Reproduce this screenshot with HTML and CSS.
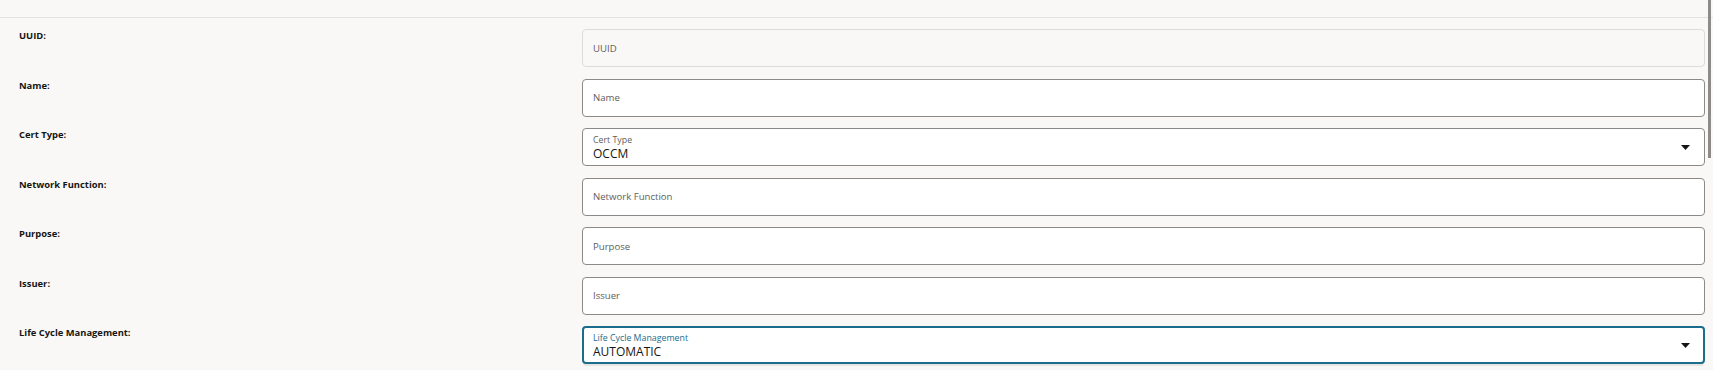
FILE: index.html
```html
<!DOCTYPE html>
<html lang="en">
<head>
<meta charset="utf-8">
<title>Certificate</title>
<link rel="stylesheet" href="styles.css">
</head>
<body>
<div class="topbar"></div>
<form class="form">
  <div class="row">
    <div class="label">UUID:</div>
    <div class="field readonly"><span class="placeholder">UUID</span></div>
  </div>
  <div class="row">
    <div class="label">Name:</div>
    <div class="field"><span class="placeholder">Name</span></div>
  </div>
  <div class="row">
    <div class="label">Cert Type:</div>
    <div class="field select">
      <div class="stack"><span class="inline-label">Cert Type</span><span class="value">OCCM</span></div>
      <svg class="caret" width="9" height="5" viewBox="0 0 9 5"><path d="M0 0h9L4.5 5z" fill="#161513"/></svg>
    </div>
  </div>
  <div class="row">
    <div class="label">Network Function:</div>
    <div class="field"><span class="placeholder">Network Function</span></div>
  </div>
  <div class="row">
    <div class="label">Purpose:</div>
    <div class="field"><span class="placeholder">Purpose</span></div>
  </div>
  <div class="row">
    <div class="label">Issuer:</div>
    <div class="field"><span class="placeholder">Issuer</span></div>
  </div>
  <div class="row">
    <div class="label">Life Cycle Management:</div>
    <div class="field select focused">
      <div class="stack"><span class="inline-label">Life Cycle Management</span><span class="value">AUTOMATIC</span></div>
      <svg class="caret" width="9" height="5" viewBox="0 0 9 5"><path d="M0 0h9L4.5 5z" fill="#161513"/></svg>
    </div>
  </div>
</form>
<div class="scrollthumb"></div>
</body>
</html>
```
FILE: styles.css
```css
html, body {
  margin: 0;
  padding: 0;
}
body {
  background: #f9f8f6;
  font-family: "Open Sans", "Noto Sans", sans-serif;
  color: #161513;
  height: 370px;
  overflow: hidden;
  position: relative;
}
.topbar {
  height: 17px;
  border-bottom: 1px solid #e3e2e0;
}
.form {
  display: flex;
  flex-direction: column;
  gap: 11.5px;
  padding: 11px 8px 0 19px;
}
.row {
  display: grid;
  grid-template-columns: 563px 1fr;
  height: 38px;
}
.label {
  font-weight: 700;
  font-size: 9.4px;
  line-height: 14px;
  color: #161513;
}
.field {
  box-sizing: border-box;
  height: 38px;
  border: 1px solid #8b8a88;
  border-radius: 4px;
  background: #ffffff;
  display: flex;
  align-items: center;
  padding: 0 10px;
  position: relative;
}
.field.readonly {
  background: #f9f8f6;
  border-color: #dedcda;
}
.placeholder {
  font-size: 9.6px;
  color: #5f5e5c;
}
.select {
  align-items: flex-start;
  justify-content: space-between;
  padding-right: 14px;
}
.stack {
  display: flex;
  flex-direction: column;
  padding-top: 5px;
}
.inline-label {
  font-size: 8.8px;
  line-height: 13px;
  color: #5f5e5c;
}
.value {
  font-size: 12px;
  line-height: 13px;
  color: #161513;
}
.caret {
  align-self: center;
}
.field.focused {
  border: 2px solid #1b6d8c;
  padding-left: 9px;
  padding-right: 13px;
  box-shadow: 0 3px 0 -1px #e6e5e3;
}
.field.focused .stack {
  padding-top: 4px;
}
.field.focused .inline-label {
  color: #1b6d8c;
}
.scrollthumb {
  position: absolute;
  top: 0;
  left: 1708px;
  width: 3px;
  height: 158px;
  background: #8c8b89;
}
```
